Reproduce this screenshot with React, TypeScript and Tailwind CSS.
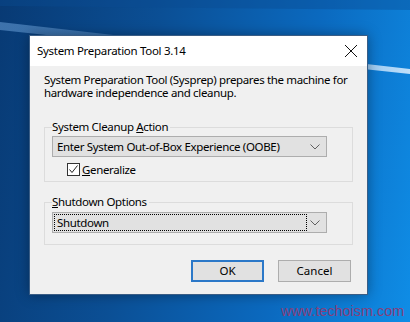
import React from 'react';

const ui = { fontFamily: '"Noto Sans", "Open Sans", sans-serif' };

function Chevron() {
  return (
    <svg width="10" height="6" viewBox="0 0 10 6" className="shrink-0">
      <path d="M0.5 0.5 L5 5 L9.5 0.5" fill="none" stroke="#606060" strokeWidth="1" />
    </svg>
  );
}

function Combo({ text, focused }: { text: string; focused?: boolean }) {
  return (
    <div className="h-[21px] w-[275px] flex items-center bg-[#e1e1e1] border border-[#adadad]">
      <div className="flex-1 h-full p-[1px]">
        <div
          className={
            'h-full flex items-center pl-[2px] w-[253px] ' +
            (focused ? 'border border-dotted border-black' : 'border border-transparent')
          }
        >
          <span className="text-[11.5px] tracking-[-0.35px] leading-none text-black">{text}</span>
        </div>
      </div>
      <div className="w-[20px] flex justify-center pr-[4px]">
        <Chevron />
      </div>
    </div>
  );
}

function GroupBox({ label, children, h }: { label: React.ReactNode; children: React.ReactNode; h: string }) {
  return (
    <div className={'relative border border-[#dcdcdc] w-[309px] ' + h}>
      <span className="absolute -top-[9px] left-[7px] bg-[#f0f0f0] pr-[2px] text-[11.5px] tracking-[-0.35px] leading-[16px] text-black">
        {label}
      </span>
      <div className="pl-[7px] pt-[8px]">{children}</div>
    </div>
  );
}

export default function App() {
  return (
    <div
      className="relative w-[410px] h-[322px] overflow-hidden bg-[linear-gradient(100deg,#083a74_0%,#0b4f95_35%,#0b6ac0_70%,#0f8de6_100%)]"
      style={ui}
    >
      <svg className="absolute inset-0" width="410" height="322" viewBox="0 0 410 322">
        <defs>
          <linearGradient id="beam" x1="0" y1="0" x2="1" y2="0">
            <stop offset="0" stopColor="#7fb6ee" stopOpacity="0.45" />
            <stop offset="0.5" stopColor="#a8d4ff" stopOpacity="0.2" />
            <stop offset="1" stopColor="#e0f0ff" stopOpacity="0.85" />
          </linearGradient>
        </defs>
        <path d="M0 22 L410 69 L410 74 L0 30 Z" fill="url(#beam)" />
        <path d="M0 0 L410 0 L410 10 L0 6 Z" fill="#0a4a90" opacity="0.4" />
      </svg>

      <div className="relative pl-[29px] pt-[35px]">
        <div className="w-[339px] h-[260px] flex flex-col border border-[#3a5d85] bg-[#f0f0f0] shadow-[0_0_12px_rgba(0,0,0,0.35)]">
          <div className="h-[30px] bg-white flex items-center justify-between pl-[7px] pr-[9px]">
            <span className="text-[11.5px] tracking-[-0.3px] text-black">System Preparation Tool 3.14</span>
            <svg width="14" height="14" viewBox="0 0 14 14">
              <path d="M1 1 L13 13 M13 1 L1 13" stroke="#111" strokeWidth="1" />
            </svg>
          </div>

          <div className="flex-1 pl-[14px] pt-[7px]">
            <p className="text-[11.5px] tracking-[-0.35px] leading-[13px] text-black w-[305px]">
              System Preparation Tool (Sysprep) prepares the machine for hardware independence and cleanup.
            </p>

            <div className="mt-[28px]">
              <GroupBox h="h-[55px]" label={<>System Cleanup <u>A</u>ction</>}>
                <Combo text="Enter System Out-of-Box Experience (OOBE)" />
                <div className="flex items-center mt-[6px] ml-[15px] gap-[2px]">
                  <div className="w-[13px] h-[13px] border border-[#333] bg-white flex items-center justify-center">
                    <svg width="11" height="11" viewBox="0 0 11 11">
                      <path d="M1.5 5.5 L4 8.5 L9.5 1.5" fill="none" stroke="#222" strokeWidth="1" />
                    </svg>
                  </div>
                  <span className="text-[11.5px] tracking-[-0.35px] leading-none text-black"><u>G</u>eneralize</span>
                </div>
              </GroupBox>
            </div>

            <div className="mt-[20px]">
              <GroupBox h="h-[43px]" label={<><u>S</u>hutdown Options</>}>
                <div className="mt-[1px]">
                  <Combo text="Shutdown" focused />
                </div>
              </GroupBox>
            </div>

            <div className="flex justify-end gap-[14px] mt-[15px] pr-[2px] w-[309px]">
              <button className="w-[73px] h-[22px] bg-[#e1e1e1] border-2 border-[#2b78c8] text-[11.5px] text-black">
                OK
              </button>
              <button className="w-[73px] h-[22px] bg-[#e1e1e1] border border-[#adadad] text-[11.5px] text-black">
                Cancel
              </button>
            </div>
          </div>
        </div>
      </div>

      <span
        className="absolute left-[281px] top-[301px] text-[14.4px] text-[#86407a]"
        style={{ fontFamily: '"Liberation Sans", Arial, sans-serif' }}
      >
        www.techoism.com
      </span>
    </div>
  );
}
